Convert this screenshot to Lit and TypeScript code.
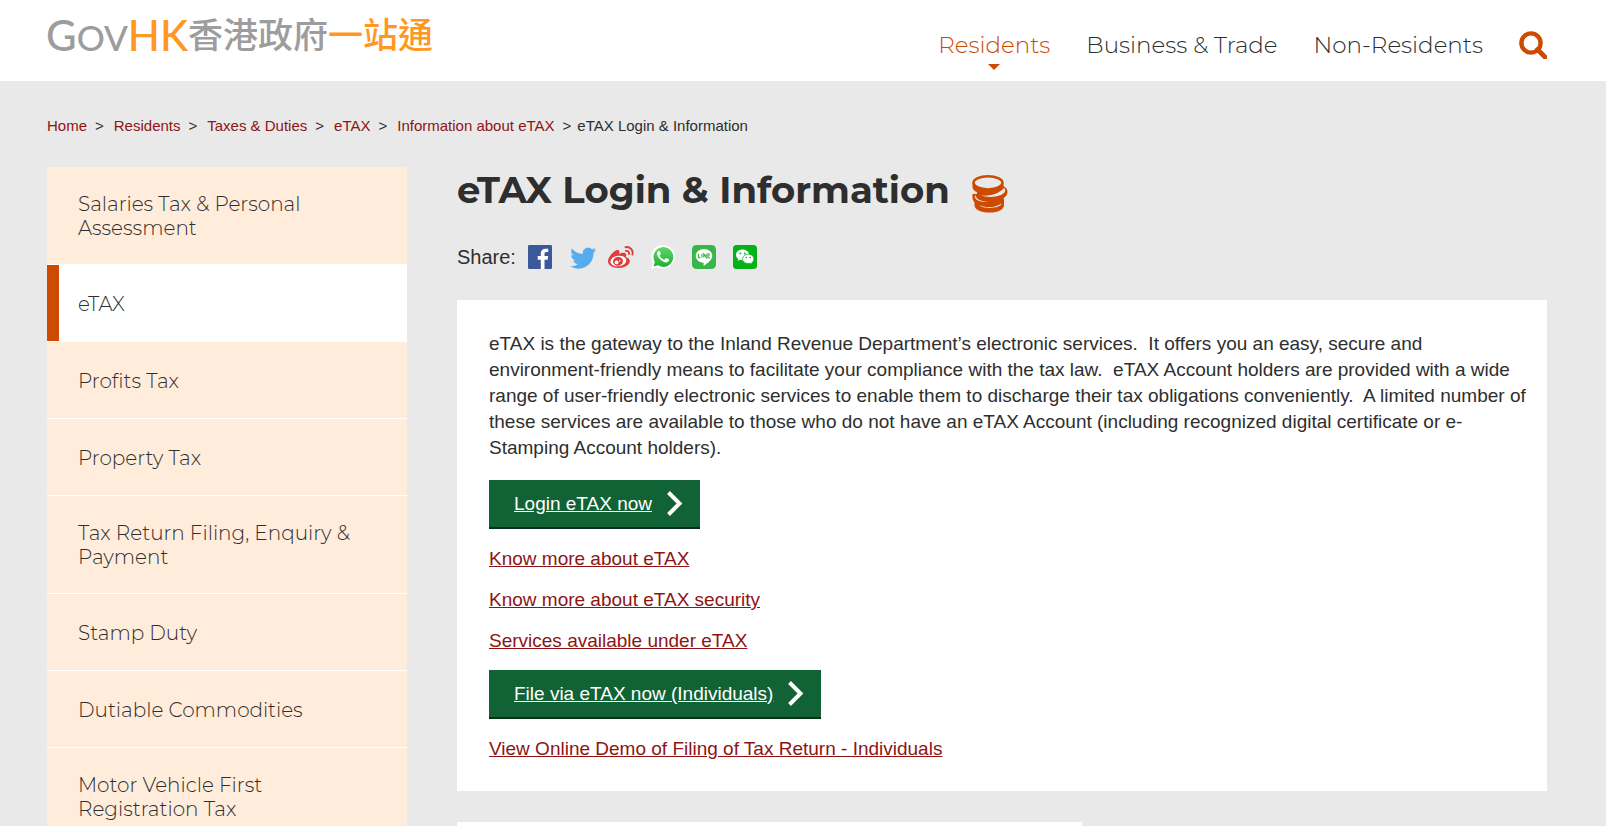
import { LitElement, html, css, svg } from "lit";
import { customElement, property } from "lit/decorators.js";
import { classMap } from "lit/directives/class-map.js";

const crumbs = ["Home", "Residents", "Taxes & Duties", "eTAX", "Information about eTAX"];

const sections = [
  "Salaries Tax & Personal Assessment",
  "eTAX",
  "Profits Tax",
  "Property Tax",
  "Tax Return Filing, Enquiry & Payment",
  "Stamp Duty",
  "Dutiable Commodities",
  "Motor Vehicle First Registration Tax",
];

const icons = {
  search: svg`<svg viewBox="0 0 28 28" width="28" height="28" aria-hidden="true">
    <circle cx="12" cy="12" r="9.6" fill="none" stroke="#cc4b00" stroke-width="4.4"/>
    <path d="M18.5 18.5L26 26" stroke="#cc4b00" stroke-width="4.8" stroke-linecap="round"/></svg>`,
  coins: svg`<svg viewBox="0 0 36 38" width="36" height="38" aria-hidden="true">
    <g fill="#cc4b00">
      <path d="M2.500 26V30C2.500 34.800 9 37.600 17.500 37.600S32 34.800 32 30V24Z"/>
      <path d="M.5 19V23C.5 28 7.500 31 16 31S31.500 28 31.500 23V18Z"/>
      <path d="M5 15V19C6 23 12 26 20 26C29 26 35.500 22 35.500 17C35.500 13 32 11 28 10Z"/>
      <path d="M.5 8V12C.5 16.500 7.500 19 16 19S31.500 16.500 31.500 12V8Z"/>
    </g>
    <ellipse cx="16" cy="7.800" rx="14.500" ry="6.600" fill="#e9e9e9" stroke="#cc4b00" stroke-width="2.400"/>
    <g fill="#e9e9e9">
      <path d="M9 20.300C14 21.500 26 20 32 13C34.500 15 33 18 29 20C23 22.500 14 22.500 9 20.300Z"/>
      <path d="M3.800 20C3.500 24 9 26.800 16 26.600C10 27.800 3.200 25.500 3 22C3 21 3.300 20.300 3.800 20Z"/>
      <path d="M7 30C13 33 23.500 33 29.500 28.500C29.500 31 23 32.900 17.500 32.900C12.500 32.900 8.500 31.700 7 30Z"/>
    </g></svg>`,
  facebook: svg`<svg viewBox="0 0 24 24" width="24" height="24" aria-hidden="true">
    <rect width="24" height="24" rx="1.300" fill="#3b5998"/>
    <path d="M16.500 24V14.700h3.100l.5-3.600h-3.600V8.800c0-1 .3-1.800 1.800-1.800h1.900V3.800c-.3 0-1.500-.1-2.800-.1-2.800 0-4.600 1.700-4.600 4.700v2.700H9.700v3.600h3.100V24Z" fill="#fff"/></svg>`,
  twitter: svg`<svg class="bleed" viewBox="-2 -1 24 24" width="26" height="26" aria-hidden="true">
    <path fill="#55acee" d="M23.953 4.570a10 10 0 01-2.825.775 4.958 4.958 0 002.163-2.723c-.951.555-2.005.959-3.127 1.184a4.920 4.920 0 00-8.384 4.482C7.690 8.095 4.067 6.130 1.640 3.162a4.822 4.822 0 00-.666 2.475c0 1.710.870 3.213 2.188 4.096a4.904 4.904 0 01-2.228-.616v.060a4.923 4.923 0 003.946 4.827 4.996 4.996 0 01-2.212.085 4.936 4.936 0 004.604 3.417 9.867 9.867 0 01-6.102 2.105c-.390 0-.779-.023-1.170-.067a13.995 13.995 0 007.557 2.209c9.053 0 13.998-7.496 13.998-13.985 0-.210 0-.420-.015-.630A9.935 9.935 0 0024 4.590z"/></svg>`,
  weibo: svg`<svg class="bleed" viewBox="2 0 26 22" width="26" height="22" aria-hidden="true">
    <path fill="#e03c3c" d="M10.500 4.200C12 5 11.200 7 11 7.900c2.500-1.100 5.800-1.600 6.900-.1.700 1 .3 2-.1 3.100 2.400.7 4 2 4 4.300 0 3.600-5.200 6.700-11 6.700C4.700 21.900 0 19.200 0 15.200 0 10.200 7.700 3 10.500 4.200Z"/>
    <ellipse cx="10.400" cy="15" rx="8" ry="5.300" transform="rotate(-7 10.400 15)" fill="#fff"/>
    <ellipse cx="10" cy="15.300" rx="5" ry="4.400" transform="rotate(-15 10 15.300)" fill="#e03c3c"/>
    <circle cx="8.600" cy="16.400" r="1.900" fill="#fff"/><circle cx="11.700" cy="14.800" r=".8" fill="#fff"/>
    <path d="M17.500 1.200c4.400-1 8.200 3 6.900 7.400M18 5c2-.5 3.500 1 3 3" fill="none" stroke="#e03c3c" stroke-width="1.900" stroke-linecap="round"/></svg>`,
  whatsapp: svg`<svg class="bleed" viewBox="1 0 24 24" width="24" height="24" aria-hidden="true">
    <defs><linearGradient id="wa" x1="0" y1="0" x2="0" y2="1"><stop offset="0" stop-color="#5fd668"/><stop offset="1" stop-color="#20b038"/></linearGradient></defs>
    <path d="M0 24l1.700-6.200A11.900 11.900 0 1 1 6.300 22.300Z" fill="#fff"/>
    <path d="M2.500 21.500l1.300-4.600A9.900 9.900 0 1 1 7 20.300Z" fill="url(#wa)"/>
    <path d="M8.900 6.600c-.3-.7-.5-.7-1.200-.6-.9.300-1.700 1.300-1.700 2.800 0 2.600 4.600 8.200 8.800 8.700 1.500.1 3-.8 3.200-1.900.2-1 .1-1.200-.2-1.300l-2.300-1.100c-.4-.2-.6-.1-.8.200l-1 1.200c-.2.200-.4.300-.7.100-1.900-.8-3.300-2.100-4.200-3.800-.1-.3 0-.5.900-1.600.1-.2.200-.4.100-.6Z" fill="#fff"/></svg>`,
  line: svg`<svg viewBox="0 0 24 24" width="24" height="24" aria-hidden="true">
    <rect width="24" height="24" rx="4.500" fill="#39b54a"/>
    <path d="M12 4c4.600 0 8.300 3 8.300 6.800 0 3.800-4.500 7.400-8.300 9.900-.8.300-.4-1-.4-2.900C7.200 17.700 3.700 14.600 3.700 10.800 3.700 7 7.400 4 12 4Z" fill="#fff"/>
    <path d="M6.600 8.800v3.800h1.800M10 8.800v3.800M11.800 12.600V8.800l2.400 3.800V8.800M17.800 8.900h-1.900v3.700h1.900M15.900 10.700h1.700" fill="none" stroke="#39b54a" stroke-width="1.100"/></svg>`,
  wechat: svg`<svg class="bleed" viewBox="-1 0 24 24" width="24" height="24" aria-hidden="true">
    <rect width="24" height="24" rx="3.500" fill="#03b119"/>
    <path d="M9.500 4.500C5.700 4.500 3 6.900 3 9.900c0 1.700.9 3.100 2.300 4.100l-.6 1.900 2.200-1.100c.9.300 1.700.4 2.700.4 3.700 0 6.500-2.300 6.500-5.300s-2.900-5.400-6.600-5.400Z" fill="#fff"/>
    <path d="M15.300 9.200c-3.300 0-5.800 2.100-5.800 4.700s2.600 4.700 5.800 4.700c.7 0 1.400-.1 2-.3l1.900 1-.5-1.600c1.400-.9 2.200-2.200 2.200-3.800 0-2.600-2.400-4.700-5.600-4.700Z" fill="#fff" stroke="#03b119" stroke-width=".7"/>
    <g fill="#03b119"><circle cx="7.400" cy="8.400" r=".9"/><circle cx="11.700" cy="8.400" r=".9"/><circle cx="13.400" cy="12.500" r=".8"/><circle cx="17.200" cy="12.500" r=".8"/></g></svg>`,
  chevron: svg`<svg viewBox="0 0 16 25" width="16" height="25" aria-hidden="true">
    <path d="M1.500 1.500L12.500 12.500L1.500 23.500" fill="none" stroke="#fff" stroke-width="4"/></svg>`,
};

@customElement("action-link")
class ActionLink extends LitElement {
  @property() label = "";

  static styles = css`
    :host { display: block; }
    .action {
      display: inline-flex;
      align-items: center;
      gap: 15px;
      height: 47px;
      padding: 0 17px 0 25px;
      border-bottom: 2px solid #06301a;
      background: #116234;
      color: #fff;
      vertical-align: top;
    }
    svg { display: block; }
  `;

  render() {
    return html`<a class="action" href="#">${this.label}${icons.chevron}</a>`;
  }
}

@customElement("app-root")
class AppRoot extends LitElement {
  static styles = css`
    :host {
      display: block;
      height: 100vh;
      overflow: hidden auto;
      scrollbar-width: none;
      background: #e9e9e9;
      color: #2e2e2e;
      font: 19px/26px "Liberation Sans", Arial, sans-serif;
    }
    * { box-sizing: border-box; }
    svg { display: block; }
    .bleed { overflow: visible; }
    a { color: #8e1414; }
    .header {
      display: flex;
      justify-content: space-between;
      align-items: flex-start;
      height: 81px;
      padding: 0 59px 0 46px;
      background: #fff;
    }
    .logo {
      display: flex;
      align-items: flex-start;
      padding-top: 9px;
      line-height: 52px;
      color: #9d9d9d;
      text-decoration: none;
      white-space: nowrap;
    }
    .latin { font-family: Lato, sans-serif; font-size: 42px; font-weight: 500; }
    .latin small { font-size: 35px; }
    .han { font: 500 35px/48px "Noto Sans CJK TC", sans-serif; }
    .accent { color: #ff9822; }
    .nav {
      display: flex;
      gap: 36px;
      padding-top: 31px;
      font: 300 23px/28px Montserrat, Inter, sans-serif;
    }
    .nav a {
      display: flex;
      flex-direction: column;
      align-items: center;
      gap: 5px;
      color: #2e2e2e;
      text-decoration: none;
    }
    .nav .current { color: #cc4b00; }
    .current::after {
      content: "";
      border: 6px solid transparent;
      border-top-color: #cc4b00;
      border-bottom: 0;
    }
    .search { padding: 0; border: 0; background: none; height: 28px; }
    .page { padding: 35px 59px 0 47px; }
    .crumbs {
      display: flex;
      flex-wrap: wrap;
      margin: 0 0 31px;
      padding: 0;
      list-style: none;
      font-size: 15px;
      line-height: 20px;
    }
    .crumbs a { text-decoration: none; }
    .crumbs li:not(:last-child)::after { content: ">"; margin: 0 10px 0 8px; }
    .crumbs li:nth-last-child(2)::after { margin-right: 6px; }
    .columns { display: flex; gap: 50px; align-items: flex-start; }
    .sidebar { flex: 0 0 360px; font: 300 20px/24px Montserrat, Inter, sans-serif; }
    .sidebar a {
      display: flex;
      align-items: center;
      min-height: 77px;
      padding: 25px 31px 24px;
      border-bottom: 1px solid #fff;
      background: #ffecdb;
      color: #2e2e2e;
      text-decoration: none;
    }
    .sidebar .selected { background: #fff; box-shadow: inset 12px 0 #cc4b00; }
    .main { flex: 1; min-width: 0; }
    .title { display: flex; align-items: flex-end; gap: 22px; }
    h1 { margin: 0; font: 700 37px/46px Montserrat, Inter, sans-serif; }
    .share {
      display: flex;
      align-items: center;
      gap: 16px;
      margin: 31px 0 30px;
      font-size: 20px;
      line-height: 26px;
    }
    .share span { margin-right: -4px; }
    .card {
      display: flex;
      flex-direction: column;
      align-items: flex-start;
      gap: 15px;
      padding: 31px 16px 29px 32px;
      background: #fff;
    }
    p { margin: 0 0 3px; }
    action-link { margin: 1px 0 2px; }
    .next { width: 625px; max-width: 100%; min-height: 60px; margin-top: 31px; }
  `;

  render() {
    return html`
      <header class="header">
        <a class="logo" href="#" aria-label="GovHK">
          <span class="latin">G<small>OV</small><span class="accent">HK</span></span>
          <span class="han">香港政府<span class="accent">一站通</span></span>
        </a>
        <nav class="nav">
          <a class="current" href="#">Residents</a>
          <a href="#">Business &amp; Trade</a>
          <a href="#">Non-Residents</a>
          <button class="search" aria-label="Search">${icons.search}</button>
        </nav>
      </header>
      <div class="page">
        <ol class="crumbs">
          ${crumbs.map((name) => html`<li><a href="#">${name}</a></li>`)}
          <li>eTAX Login &amp; Information</li>
        </ol>
        <div class="columns">
          <nav class="sidebar">
            ${sections.map((name) => html`<a href="#" class=${classMap({ selected: name === "eTAX" })}>${name}</a>`)}
          </nav>
          <main class="main">
            <div class="title"><h1>eTAX Login &amp; Information</h1>${icons.coins}</div>
            <div class="share">
              <span>Share:</span>
              <a href="#" aria-label="Facebook">${icons.facebook}</a>
              <a href="#" aria-label="Twitter">${icons.twitter}</a>
              <a href="#" aria-label="Weibo">${icons.weibo}</a>
              <a href="#" aria-label="WhatsApp">${icons.whatsapp}</a>
              <a href="#" aria-label="LINE">${icons.line}</a>
              <a href="#" aria-label="WeChat">${icons.wechat}</a>
            </div>
            <section class="card">
              <p>eTAX is the gateway to the Inland Revenue Department’s electronic services.&nbsp; It offers you an easy, secure and environment-friendly means to facilitate your compliance with the tax law.&nbsp; eTAX Account holders are provided with a wide range of user-friendly electronic services to enable them to discharge their tax obligations conveniently.&nbsp; A limited number of these services are available to those who do not have an eTAX Account (including recognized digital certificate or e-Stamping Account holders).</p>
              <action-link label="Login eTAX now"></action-link>
              <a href="#">Know more about eTAX</a>
              <a href="#">Know more about eTAX security</a>
              <a href="#">Services available under eTAX</a>
              <action-link label="File via eTAX now (Individuals)"></action-link>
              <a href="#">View Online Demo of Filing of Tax Return - Individuals</a>
            </section>
            <section class="card next"></section>
          </main>
        </div>
      </div>
    `;
  }
}
